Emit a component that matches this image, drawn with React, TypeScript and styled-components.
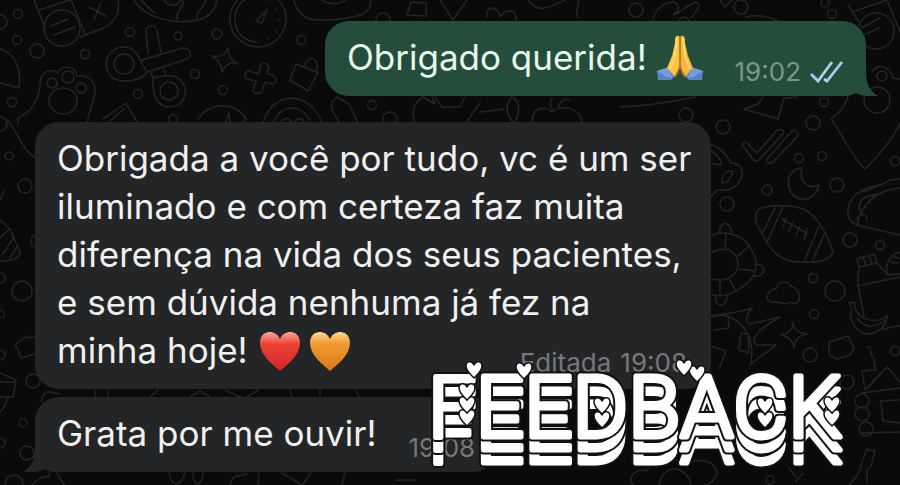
import React from "react";
import styled, { createGlobalStyle } from "styled-components";

const GlobalStyle = createGlobalStyle`
  body {
    margin: 0;
    background: #0a0a0b;
    font-family: Inter, "Liberation Sans", sans-serif;
  }
`;

const Chat = styled.main`
  position: relative;
  box-sizing: border-box;
  min-height: 100vh;
  padding: 21px 34px 12px 35px;
  display: flex;
  flex-direction: column;
  overflow: hidden;
  background: #0a0a0b;
`;

const Wallpaper = styled.svg`
  position: absolute;
  inset: 0;
  width: 100%;
  height: 100%;
  fill: none;
  stroke: #252526;
  stroke-width: 1.5;
  stroke-linecap: round;
  stroke-linejoin: round;
`;

const Bubble = styled.article<{ $sent?: boolean; $gap?: number }>`
  position: relative;
  box-sizing: border-box;
  align-self: ${(p) => (p.$sent ? "flex-end" : "flex-start")};
  display: flex;
  align-items: flex-end;
  max-width: 676px;
  margin-top: ${(p) => p.$gap ?? 0}px;
  padding: 12px 16px 15px 22px;
  border-radius: 24px;
  color: ${(p) => (p.$sent ? "#e6f8ec" : "#f0f0f1")};
  background: ${(p) => (p.$sent ? "#264d3b" : "#242527")};
`;

const Message = styled.p`
  margin: 0;
  font-size: 35px;
  line-height: 48px;
`;

const Meta = styled.span<{ $sent?: boolean; $inline?: boolean }>`
  display: flex;
  align-items: center;
  gap: 9px;
  float: ${(p) => (p.$inline ? "right" : "none")};
  margin: ${(p) => (p.$inline ? "20px 8px -20px 0" : "0 6px -8px 32px")};
  font-size: 26px;
  line-height: 34px;
  color: ${(p) => (p.$sent ? "#769a86" : "#77787a")};
`;

const Tail = styled.svg<{ $sent?: boolean }>`
  position: absolute;
  bottom: 0;
  ${(p) => (p.$sent ? "right: -12px;" : "left: -12px; transform: scaleX(-1);")}
  width: 36px;
  height: 30px;
  fill: ${(p) => (p.$sent ? "#264d3b" : "#242527")};
`;

const Emoji = styled.svg<{ $spaced?: boolean }>`
  width: 46px;
  height: 46px;
  margin: -4px 0 -4px ${(p) => (p.$spaced ? 4 : 0)}px;
  vertical-align: -7px;
`;

const Checks = styled.svg`
  width: 34px;
  height: 24px;
  fill: none;
  stroke: #a9cfee;
  stroke-width: 2.8;
`;

const Sticker = styled.svg`
  position: absolute;
  right: 50px;
  bottom: 8px;
  width: 424px;
  height: 120px;
  overflow: visible;
  font-family: Roboto, sans-serif;
  font-size: 85px;
  font-weight: 300;
  stroke-linejoin: round;
  stroke-linecap: round;
`;

const HEART =
  "M0 9C-4 5-8 2-8-3C-8-8-2-9 0-4C2-9 8-8 8-3C8 2 4 5 0 9Z";

const dots: [number, number, number][] = [
  [18, 14, 4.5], [0, 22, 7], [17, 40, 4.5], [37, 51, 7], [85, 54, 4.5],
  [130, 32, 4.5], [178, 36, 4], [217, 34, 5], [195, 74, 4.5], [138, 94, 4.5],
  [223, 90, 4.5], [301, 40, 4.5], [12, 102, 4.5], [0, 124, 7], [173, 119, 4.5],
  [9, 156, 4], [25, 186, 7], [22, 291, 10], [0, 278, 5], [0, 314, 4],
  [0, 355, 5], [33, 381, 7], [23, 423, 4], [27, 453, 7], [0, 443, 5],
  [14, 484, 9], [383, 20, 7], [372, 105, 4.5], [390, 119, 7], [636, 10, 7],
  [741, 7, 7], [832, 14, 4.5], [684, 22, 5], [686, 115, 7], [723, 127, 7],
  [813, 123, 7], [799, 158, 4.5], [822, 156, 4.5], [895, 161, 4.5],
  [767, 190, 5], [837, 185, 7], [727, 204, 7], [850, 240, 7], [880, 245, 4.5],
  [813, 278, 4.5], [835, 291, 10], [814, 314, 4.5], [810, 355, 7],
  [895, 351, 4.5], [847, 382, 7], [770, 480, 4], [824, 102, 4.5], [825, 3, 4],
];

function Doodles() {
  return (
    <Wallpaper viewBox="0 0 900 485" preserveAspectRatio="xMidYMid slice" aria-hidden="true">
      {dots.map(([x, y, r], i) => (
        <circle key={i} cx={x} cy={y} r={r} />
      ))}
      {/* game pad */}
      <path d="M34 0L46 30M71 0L85 34M39 10L70 0M80 37L103 28C116 22 120 12 118 0M89 7L106 16M101 2L94 20M51 26L68 19M54 35L75 27" />
      <circle cx="62" cy="28" r="18" />
      {/* watermelon */}
      <path d="M134 0C145 18 173 25 198 20C211 17 216 7 217 0M141 0C148 7 148 8 155 13M164 0C170 8 178 6 181 0M177 19C175 12 184 8 183 0M197 18C195 11 206 7 205 0" />
      {/* timer */}
      <circle cx="258" cy="19" r="28" />
      <path d="M235 19C235 33 244 41 257 42M235 17C236 7 240 2 246-1M256 21L267 10L262 23ZM269 0L269 1M276 9L276 10M279 19L279 20M276 31L276 32M268 38L268 39" />
      <path d="M294 0C297 13 306 21 322 20C336 20 352 18 363 14C370 10 371 5 371 0M322 0C330 6 340 4 346 0" />
      {/* scissors */}
      <circle cx="124" cy="64" r="10" />
      <circle cx="169" cy="91" r="9" />
      <path d="M147 72C143 78 134 81 124 81C100 81 101 47 124 47C138 47 139 60 147 72L187 59C193 56 190 47 183 48L142 60M148 54L146 32C145 24 156 24 157 31L161 52M163 68L166 76M151 73L153 78C152 90 155 106 168 107C183 108 188 95 184 85C179 75 169 74 153 78" />
      {/* paw shield */}
      <path d="M18 124L18 118C32 112 38 101 40 86C40 70 51 68 58 73C61 64 75 65 77 76C88 74 95 81 95 91C94 103 88 114 87 124" />
      <circle cx="52" cy="83" r="5" />
      <circle cx="68" cy="77" r="6" />
      <circle cx="81" cy="88" r="5" />
      <ellipse cx="63" cy="101" rx="14" ry="13" />
      <path d="M0 49C14 53 22 68 19 88L0 83M103 119L126 103L137 122M110 121L124 109" />
      {/* sparkle, plus, bag */}
      <path d="M228 48C228 56 231 60 238 64C229 62 225 64 222 72C221 64 219 60 212 56C220 57 225 56 228 48Z" />
      <path d="M260 68C259 63 267 62 269 66L267 73L274 76C278 78 276 84 272 84L265 82L262 91C260 95 253 94 253 90L256 81L247 79C243 77 245 71 249 71L258 74Z" />
      <path d="M296 64L318 73L308 91L290 80ZM304 66C308 54 321 57 316 72" />
      <path d="M198 119C208 103 233 100 246 118L243 123M226 121L229 113L230 122M263 123C273 89 311 91 322 123M273 123C282 103 300 104 310 120M281 121C286 117 290 118 292 123M295 121C299 117 303 119 305 123" />
      <path d="M411 2L426 3L426 16L407 15ZM440 0L453 20L467 0M487 17C485 6 498 4 500 17C506 8 517 9 516 20M528 0C538 15 552 6 565 0M578 18C574 10 580 4 578 0M653 20C655 8 666 2 673 2C679 4 681 10 674 14C672 18 684 8 695 2C702 3 699 9 691 18M720 0L725 7L732 0M746 17C759 14 770 17 778 21" />
      {/* strip under the sent bubble */}
      <path d="M332 102L337 97L349 104L358 123M332 103C330 110 336 117 340 123M415 123C411 112 414 102 423 97L435 104L432 97M435 97L442 107L460 107L465 97M480 112L504 109M466 123L480 103M512 97C503 107 508 118 514 123C520 113 521 102 512 97M532 123C532 104 548 107 552 112C563 104 581 108 582 123M553 111C548 104 551 99 553 98M558 109C559 101 566 98 570 100" />
      {/* arrow and emblem at the right */}
      <path d="M744 109L778 119L784 98L797 97M744 109L758 104L763 97M620 107C650 106 675 101 695 97M831 119C842 134 854 160 865 169C878 157 900 131 904 112M831 119C841 112 847 103 849 93M848 5L862 27M887 0L900 32M852 12L887 0M862 28L879 18M864 35L879 28" />
      <circle cx="876" cy="31" r="18" />
      <circle cx="877" cy="100" r="13" />
      <circle cx="882" cy="76" r="5" />
      <path d="M872 72C878 64 890 65 893 78L904 80" />
      {/* ticks */}
      <path d="M743 146C740 141 747 141 750 146L757 153L777 130C783 128 786 132 781 136L759 160C756 162 754 161 752 158ZM768 158L791 132C796 128 800 134 796 138L774 161C770 166 765 162 768 158Z" />
      {/* frog */}
      <path d="M709 144C719 146 726 154 731 163C742 163 745 173 740 181C733 192 723 190 717 190L710 198M709 150C718 154 723 163 721 165L708 163M722 181C722 174 728 169 733 172C731 178 727 183 722 183Z" />
      {/* moon and football */}
      <path d="M802 168C794 168 786 175 789 187C792 203 815 204 819 185C809 190 798 182 802 168Z" />
      <path d="M756 214C757 204 782 205 797 207C817 211 828 237 833 251C831 262 813 263 801 262C775 263 767 244 756 222ZM776 206L762 234M783 207L767 242M819 226L804 262M824 234L812 262M782 219L808 234M786 218L783 227M793 222L789 231M800 226L796 235M807 229L804 239" />
      {/* turtle */}
      <path d="M709 236C727 228 747 237 752 251C763 269 750 282 742 287C729 297 719 297 709 294M720 233C718 220 732 220 732 235M755 264C768 263 766 278 753 276M716 295C713 308 728 309 727 294M726 233L725 250M749 246L738 256M754 271L739 269M736 291L730 280M720 281L720 294M710 254C723 244 738 251 738 264C739 273 727 281 719 280L709 279" />
      {/* taco */}
      <path d="M857 225C842 220 847 197 861 191C873 184 884 187 889 180L900 179M857 225C861 205 875 190 900 188M857 225L900 235M861 192C872 190 878 185 887 182M863 214C856 209 860 198 867 197L877 194M856 220C860 213 867 213 867 220M869 202L870 203M865 207L866 208" />
      {/* bottle */}
      <path d="M859 267L857 259L874 254L877 263ZM863 257L866 266M869 256L872 264M860 268C856 275 857 282 864 316M878 264L888 275L900 274M857 286L900 277M887 275C885 263 890 254 900 252M891 262L898 263M894 257L899 258" />
      {/* banana */}
      <path d="M849 303L854 302C855 320 875 325 887 316C887 329 873 334 866 334C854 332 848 317 852 309ZM857 318C866 330 876 327 886 320M882 330C890 327 894 326 900 326" />
      {/* cloud, comet, sparkle */}
      <path d="M771 302C764 299 768 289 776 289C776 282 788 279 792 287C800 288 802 303 795 304C790 301 788 303 785 304C781 301 777 303 771 302Z" />
      <path d="M711 316C726 314 737 313 752 308C743 319 746 326 754 323L780 317C755 331 751 340 756 345L776 345C768 352 758 357 750 365M712 317C730 310 751 328 752 350L751 364M728 316L729 328L714 330M741 333L748 334L749 353L739 350ZM711 346L726 351L719 369" />
      <path d="M793 322C793 330 798 333 807 334C798 336 795 340 794 348C792 339 788 336 781 335C789 333 793 330 793 322Z" />
      <path d="M829 342L848 336L854 349L850 355L837 359L830 355C827 351 830 347 829 342ZM867 347C873 347 869 354 872 356C877 359 872 365 876 369" />
      {/* house and truck */}
      <path d="M862 371L865 390L881 373M862 371L876 370M867 389L887 367L900 382M862 393L900 388M880 401L899 400M881 401L883 421L900 423M862 433L900 432" />
      <circle cx="862" cy="401" r="7" />
      <circle cx="862" cy="414" r="7" />
      <circle cx="866" cy="429" r="7" />
      <path d="M862 461L867 449L875 451L871 466L867 469L867 482M862 462C861 472 856 477 849 485M633 485C626 475 639 468 646 471C659 453 676 461 687 461C702 460 713 459 717 472C716 481 707 485 706 485M659 485C662 466 684 462 691 484M789 468L796 477M796 481L803 473" />
      {/* left edge */}
      <path d="M0 200L4 190M7 120C18 132 22 150 35 158M0 220L10 229L20 252C20 258 14 261 0 261M0 238L9 229M3 254L14 237M10 258L17 247M35 337L29 338L27 336L20 341L15 345L18 350L21 358L34 354M0 373L16 380L13 397L0 397M0 382L16 382M8 397C6 403 3 410 0 412M37 235C28 236 30 247 36 248" />
      {/* strip between and below the received bubbles */}
      <path d="M42 402C41 390 50 391 59 394M95 390L95 397M108 390L108 397M150 397L158 390M190 397L200 391L210 397M225 390L240 397M247 397L258 390M290 390L292 397M320 390L320 397M356 390L359 397M32 485C39 477 44 476 49 477L50 472M57 473L61 480L65 485M169 473C171 485 180 489 185 473M193 473C193 490 203 484 203 473M230 485C233 473 238 477 247 474M258 485L259 473M282 473L302 485L311 473M342 485L345 473M396 480L416 480" />
    </Wallpaper>
  );
}

function BubbleTail({ sent }: { sent?: boolean }) {
  return (
    <Tail $sent={sent} viewBox="0 0 36 30" aria-hidden="true">
      <path d="M24 0C24 15 25 23 36 30C27 31 20 30 14 27C9 30 4 30 0 30L0 10Z" />
    </Tail>
  );
}

function Prayer() {
  return (
    <Emoji viewBox="0 0 46 46" role="img" aria-label="mãos em oração">
      <path d="M0 36L14 31L20 39L14 45L1 45ZM46 36L32 31L26 39L32 45L45 45Z" fill="#5b83c7" />
      <path d="M0 36L10 33L16 43L10 42Z" fill="#799cdb" />
      <path d="M46 36L36 33L30 43L36 42Z" fill="#799cdb" />
      <path d="M22 1C18 0 18 3 18 8L15 21L10 33L18 42C22 39 23 33 23 28L23 3Z" fill="#f8c543" />
      <path d="M24 1C28 0 28 3 28 8L31 21L36 33L28 42C24 39 23 33 23 28L23 3Z" fill="#f4b63c" />
      <path d="M20 3L18 21L13 34M26 3L28 21L33 34" fill="none" stroke="#ffdc69" strokeWidth="2" />
      <path d="M23 2L23 31C22 36 20 39 18 42M23 31C24 36 26 39 28 42" fill="none" stroke="#a96a1d" strokeWidth="1.5" />
    </Emoji>
  );
}

function Heart({ label, top, middle, bottom, spaced }: {
  label: string; top: string; middle: string; bottom: string; spaced?: boolean;
}) {
  return (
    <Emoji $spaced={spaced} viewBox="0 0 46 46" role="img" aria-label={label}>
      <defs>
        <linearGradient id={label} x1="0" y1="0" x2="0" y2="1">
          <stop offset="0" stopColor={top} />
          <stop offset=".3" stopColor={middle} />
          <stop offset="1" stopColor={bottom} />
        </linearGradient>
      </defs>
      <path
        fill={`url(#${label})`}
        d="M23 43C15 36 3 27 3 15C3 1 19 1 23 11C27 1 43 1 43 15C43 27 31 36 23 43Z"
      />
    </Emoji>
  );
}

const BACK_LAYERS = [26, 13];

function FeedbackSticker() {
  return (
    <Sticker viewBox="0 0 424 120" role="img" aria-label="FEEDBACK">
      {BACK_LAYERS.map((dy) => (
        <g key={dy} transform={`translate(0 ${dy})`}>
          <use href="#sticker-word" fill="#111" stroke="#111" strokeWidth="9" />
          <use href="#sticker-word" fill="#fff" stroke="#fff" strokeWidth="5" />
        </g>
      ))}
      <use href="#sticker-word" fill="#111" stroke="#111" strokeWidth="9" />
      <g fill="#fff" stroke="#fff" strokeWidth="5">
        <text id="sticker-word" x="2" y="80">FEEDBACK</text>
      </g>
      <g fill="#fff" stroke="#111" strokeWidth="1.5">
        {[
          [41, 60], [41, 47], [41, 34], [48, 12], [98, 13], [176, 62], [176, 48],
          [271, 16], [258, 10], [339, 62], [339, 48], [406, 60], [406, 47],
        ].map(([x, y]) => (
          <path key={`${x}-${y}`} d={HEART} transform={`translate(${x} ${y})`} />
        ))}
      </g>
    </Sticker>
  );
}

export default function App() {
  return (
    <>
      <GlobalStyle />
      <Chat>
        <Doodles />
        <Bubble $sent>
          <BubbleTail sent />
          <Message>
            Obrigado querida! <Prayer />
          </Message>
          <Meta $sent>
            <time>19:02</time>
            <Checks viewBox="0 0 34 24" role="img" aria-label="Lida">
              <path d="M1 14L8 21L22 2M14 19L17 21L32 2" />
            </Checks>
          </Meta>
        </Bubble>
        <Bubble $gap={26}>
          <Message>
            Obrigada a você por tudo, vc é um ser iluminado e com certeza faz muita
            diferença na vida dos seus pacientes, e sem dúvida nenhuma já fez na
            minha hoje!{" "}
            <Heart label="vermelho" top="#f8a9a0" middle="#ee4438" bottom="#cf2427" />
            <Heart label="laranja" top="#ffd895" middle="#f29a32" bottom="#d97818" spaced />
            <Meta $inline>
              Editada <time>19:08</time>
            </Meta>
          </Message>
        </Bubble>
        <Bubble $gap={8}>
          <BubbleTail />
          <Message>Grata por me ouvir!</Message>
          <Meta>
            <time>19:08</time>
          </Meta>
        </Bubble>
        <FeedbackSticker />
      </Chat>
    </>
  );
}
